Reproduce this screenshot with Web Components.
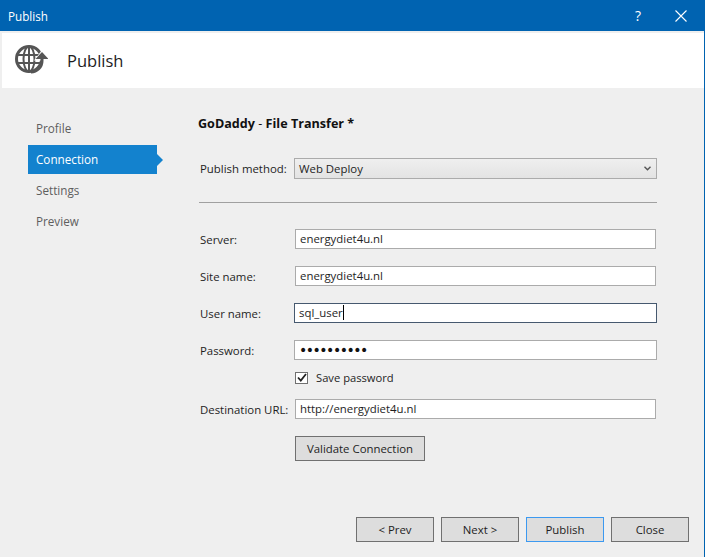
<!DOCTYPE html>
<html>
<head>
<meta charset="utf-8">
<title>Publish</title>
<style>
  html, body { margin: 0; height: 100%; background: #efefef; }
  body { font: 11.4px "Open Sans", "Noto Sans", sans-serif; overflow: hidden; }
</style>
</head>
<body>
<publish-dialog>
  <nav-item slot="nav">Profile</nav-item>
  <nav-item slot="nav" selected>Connection</nav-item>
  <nav-item slot="nav">Settings</nav-item>
  <nav-item slot="nav">Preview</nav-item>

  <form-row slot="method" label="Publish method:">
    <select-box wide>Web Deploy</select-box>
  </form-row>

  <form-row label="Server:"><text-field>energydiet4u.nl</text-field></form-row>
  <form-row label="Site name:"><text-field>energydiet4u.nl</text-field></form-row>
  <form-row label="User name:"><text-field wide focused>sql_user</text-field></form-row>
  <form-row label="Password:"><text-field wide dots>••••••••••</text-field></form-row>
  <form-row style="margin-top:10px"><check-box checked>Save password</check-box></form-row>
  <form-row label="Destination URL:" style="margin-top:14px"><text-field>http://energydiet4u.nl</text-field></form-row>
  <form-row><push-button style="width:130px">Validate Connection</push-button></form-row>

  <push-button slot="actions">&lt; Prev</push-button>
  <push-button slot="actions">Next &gt;</push-button>
  <push-button slot="actions" default>Publish</push-button>
  <push-button slot="actions">Close</push-button>
</publish-dialog>

<script>
/** Defines an element with an open shadow root from a chunk of html. */
function define(name, html) {
  customElements.define(name, class extends HTMLElement {
    constructor() {
      super();
      this.attachShadow({mode: 'open'}).innerHTML = html;
    }

    connectedCallback() {
      const label = this.shadowRoot.querySelector('[data-label]');
      if (label) label.textContent = this.getAttribute('label') || '';
    }
  });
}

define('nav-item', `
  <style>
    :host {
      display: flex;
      align-items: center;
      position: relative;
      box-sizing: border-box;
      width: 129px;
      height: 29px;
      padding-left: 8px;
      padding-bottom: 1px;
      font-size: 11.7px;
      color: #5e5e5e;
    }
    :host([selected]) { background: #1382ce; color: #fff; }
    :host([selected])::after {
      content: '';
      position: absolute;
      left: 100%;
      top: 9px;
      border-left: 6px solid #1382ce;
      border-top: 6px solid transparent;
      border-bottom: 6px solid transparent;
    }
  </style>
  <slot></slot>
`);

define('form-row', `
  <style>
    :host { display: flex; align-items: center; margin-top: 17px; color: #1e1e1e; }
    :host(:first-child) { margin-top: 0; }
    .label { width: 96px; flex: none; padding-left: 1px; box-sizing: border-box; }
    .field { flex: 1; min-width: 0; }
  </style>
  <span class="label" data-label></span>
  <div class="field"><slot></slot></div>
`);

define('text-field', `
  <style>
    :host {
      display: flex;
      align-items: center;
      box-sizing: border-box;
      height: 20px;
      width: 361px;
      padding-left: 4px;
      padding-bottom: 1px;
      background: #fff;
      border: 1px solid #ababab;
      color: #1e1e1e;
      white-space: nowrap;
    }
    :host([wide]) { width: 363px; margin-left: -1px; }
    :host([focused]) { border-color: #46596f; }
    :host([dots]) { font: 14px "DejaVu Sans", sans-serif; letter-spacing: -1.48px; color: #111; padding-left: 4px; }
    .caret { width: 1px; height: 15px; background: #000; display: none; }
    :host([focused]) .caret { display: block; }
  </style>
  <slot></slot><span class="caret"></span>
`);

define('select-box', `
  <style>
    :host {
      display: flex;
      align-items: center;
      justify-content: space-between;
      box-sizing: border-box;
      height: 21px;
      width: 363px;
      margin-left: -1px;
      padding: 0 5px 1px 4px;
      background: linear-gradient(#efefef, #e3e3e3);
      border: 1px solid #ababab;
      color: #1e1e1e;
    }
    svg { display: block; }
  </style>
  <slot></slot>
  <svg width="7" height="5" viewBox="0 0 7 5"><path d="M.5 .8 3.5 3.8 6.5 .8" fill="none" stroke="#555" stroke-width="1.4"/></svg>
`);

define('check-box', `
  <style>
    :host { display: flex; align-items: center; height: 15px; gap: 8px; font-size: 11.2px; }
    .box {
      box-sizing: border-box;
      width: 13px;
      height: 12px;
      background: #fff;
      border: 1px solid #707070;
      display: flex;
      align-items: center;
      justify-content: center;
    }
    svg { display: block; }
  </style>
  <span class="box"><svg width="10" height="9" viewBox="0 0 10 9"><path d="M1 4.500 3.800 7.500 9 1" fill="none" stroke="#222" stroke-width="1.800"/></svg></span>
  <slot></slot>
`);

define('push-button', `
  <style>
    :host {
      display: flex;
      align-items: center;
      justify-content: center;
      box-sizing: border-box;
      width: 78px;
      height: 25px;
      padding-bottom: 1px;
      background: #dddddd;
      border: 1px solid #707070;
      color: #1e1e1e;
    }
    :host([default]) { border-color: #3c99f0; }
  </style>
  <slot></slot>
`);

define('publish-dialog', `
  <style>
    :host {
      display: grid;
      grid-template-rows: 31px 57px 1fr;
      box-sizing: border-box;
      height: 557px;
      border-right: 1px solid #0063b1;
      background: #efefef;
    }
    .titlebar {
      display: flex;
      align-items: center;
      justify-content: space-between;
      background: #0063b1;
      color: #fff;
      font-size: 11.7px;
      padding: 0 18px 0 8px;
      margin-right: -1px;
    }
    .titlebar .buttons { display: flex; align-items: center; gap: 34px; }
    .titlebar .help { font-size: 14px; }
    .titlebar svg { display: block; }
    .banner {
      display: flex;
      align-items: center;
      gap: 19px;
      margin: 2px 0 0 2px;
      padding-left: 13px;
      background: #fff;
      font-size: 16.5px;
      color: #1e1e1e;
    }
    .banner svg { display: block; }
    .content {
      position: relative;
      display: grid;
      grid-template-columns: 170px 1fr;
      grid-template-rows: 1fr auto;
      padding-left: 28px;
    }
    .nav { display: flex; flex-direction: column; gap: 2px; padding-top: 26px; }
    .main { padding: 26px 0 0 0; }
    .heading { font-size: 12.6px; font-weight: 700; color: #111; height: 18px; line-height: 19px; }
    .heading span { font-weight: 400; }
    .method { margin-top: 26px; margin-left: 1px; }
    .rule { height: 1px; background: #a0a0a0; width: 458px; margin: 23px 0 26px 1px; }
    .fields { margin-left: 1px; }
    .actions {
      grid-column: 1 / 3;
      display: flex;
      justify-content: flex-end;
      gap: 7px;
      padding: 0 15px 15px 0;
    }
  </style>
  <div class="titlebar">
    <span>Publish</span>
    <div class="buttons">
      <span class="help">?</span>
      <svg width="12" height="12" viewBox="0 0 12 12"><path d="M.5 .5 11.5 11.5M11.5 .5 .5 11.5" stroke="#fff" stroke-width="1.1"/></svg>
    </div>
  </div>
  <div class="banner">
    <svg width="33" height="31" viewBox="0 0 33 31">
      <g fill="none" stroke="#555">
        <circle cx="14" cy="14" r="12.5" stroke-width="3"/>
        <ellipse cx="14" cy="14" rx="5.5" ry="12.5" stroke-width="2"/>
        <path d="M1.500 10H26.500M1.500 18H26.500M14 1.500V26.500" stroke-width="2"/>
      </g>
      <path d="M19 15.500 27 5 35 15.500Z" fill="#fff"/>
      <path d="M20.500 14 27 7 33.500 14Z" fill="#555"/>
      <path d="M27 13V16A11 11 0 0 1 16 27" fill="none" stroke="#555" stroke-width="3"/>
    </svg>
    <span>Publish</span>
  </div>
  <div class="content">
    <div class="nav"><slot name="nav"></slot></div>
    <div class="main">
      <div class="heading">GoDaddy <span>-</span> File Transfer *</div>
      <div class="method"><slot name="method"></slot></div>
      <div class="rule"></div>
      <div class="fields"><slot></slot></div>
    </div>
    <div class="actions"><slot name="actions"></slot></div>
  </div>
`);
</script>
</body>
</html>
